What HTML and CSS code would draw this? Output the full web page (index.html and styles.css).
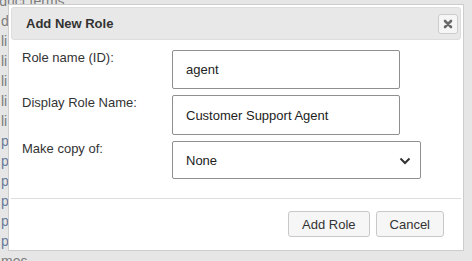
FILE: index.html
```html
<!DOCTYPE html>
<html lang="en">

<head>
  <meta charset="UTF-8" />
  <meta name="viewport" content="width=device-width, initial-scale=1.0" />
  <title>Add New Role</title>
  <link rel="stylesheet" href="styles.css">
</head>

<body>
  <div class="page">
    <div class="page-line first">product terms</div>
    <div class="page-line">d</div>
    <div class="page-line">li</div>
    <div class="page-line">li</div>
    <div class="page-line">li</div>
    <div class="page-line">li</div>
    <div class="page-line">li</div>
    <div class="page-line link">p.</div>
    <div class="page-line link">p.</div>
    <div class="page-line link">p.</div>
    <div class="page-line link">p.</div>
    <div class="page-line link">p.</div>
    <div class="page-line link">p.</div>
    <div class="page-line">mes</div>
  </div>

  <div class="dialog">
    <div class="dialog-title">
      <span class="dialog-title-text">Add New Role</span>
      <button class="dialog-close" type="button" title="Close">
        <svg width="10" height="10" viewBox="0 0 10 10">
          <path d="M2 2 L8 8 M8 2 L2 8" stroke="#6a6a6a" stroke-width="2.6" stroke-linecap="round" />
        </svg>
      </button>
    </div>

    <div class="dialog-body">
      <label class="field-label" for="role-id">Role name (ID):</label>
      <input class="field-input" id="role-id" type="text" value="agent" />

      <label class="field-label" for="role-name">Display Role Name:</label>
      <input class="field-input tall" id="role-name" type="text" value="Customer Support Agent" />

      <label class="field-label" for="role-copy">Make copy of:</label>
      <div class="select-wrap">
        <select class="field-select" id="role-copy">
          <option>None</option>
        </select>
        <svg class="select-arrow" width="12" height="8" viewBox="0 0 12 8">
          <path d="M1.5 1.5 L6 6 L10.5 1.5" fill="none" stroke="#333" stroke-width="2" />
        </svg>
      </div>
    </div>

    <div class="dialog-footer">
      <button class="btn" type="button">Add Role</button>
      <button class="btn" type="button">Cancel</button>
    </div>
  </div>
</body>

</html>
```

FILE: styles.css
```css
* {
  margin: 0;
  padding: 0;
  box-sizing: border-box;
}

html,
body {
  width: 100%;
  height: 100%;
}

body {
  background: #e6e6e6;
  font-family: "Liberation Sans", Arial, sans-serif;
  font-size: 13px;
  color: #333;
  overflow: hidden;
}

/* page behind the modal */
.page {
  margin-top: -9px;
  padding-left: 1px;
  color: #7c7c7c;
  font-size: 14px;
}

.page-line {
  line-height: 20px;
  white-space: nowrap;
}

.page-line.first {
  margin-left: -22px;
}

.page-line.link {
  color: #687a9a;
}

.dialog {
  position: absolute;
  left: 8px;
  top: 4px;
  width: 456px;
  background: #fff;
  border: 1px solid #cdcdcd;
  padding: 2px;
  display: flex;
  flex-direction: column;
}

.dialog-title {
  height: 33px;
  background: #e8e8e8;
  border: 1px solid #dddddd;
  border-radius: 3px;
  display: flex;
  align-items: center;
  justify-content: space-between;
  padding: 0 2px 0 14px;
}

.dialog-title-text {
  font-weight: bold;
  color: #333;
}

.dialog-close {
  width: 20px;
  height: 20px;
  border: 1px solid #cccccc;
  border-radius: 3px;
  background: #f6f6f6;
  display: flex;
  align-items: center;
  justify-content: center;
}

.dialog-body {
  display: grid;
  grid-template-columns: 150px auto;
  row-gap: 6px;
  padding: 10px 0 19px 11px;
  align-items: start;
}

.field-label {
  line-height: 16px;
  color: #333;
}

.field-input {
  width: 228px;
  height: 39px;
  border: 1px solid #8f8f8f;
  border-radius: 2px;
  padding: 0 13px;
  font-family: inherit;
  font-size: 13px;
  color: #222;
  background: #fff;
  outline: none;
}

.field-input.tall {
  height: 40px;
}

.select-wrap {
  position: relative;
  width: 249px;
  height: 38px;
}

.field-select {
  width: 100%;
  height: 100%;
  border: 1px solid #8f8f8f;
  border-radius: 2px;
  padding: 0 13px;
  font-family: inherit;
  font-size: 13px;
  color: #222;
  background: #fff;
  appearance: none;
  -webkit-appearance: none;
  outline: none;
}

.select-arrow {
  position: absolute;
  right: 10px;
  top: 16px;
  pointer-events: none;
}

.dialog-footer {
  border-top: 1px solid #dddddd;
  display: flex;
  justify-content: flex-end;
  gap: 6px;
  padding: 12px 17px 11px 0;
}

.btn {
  height: 26px;
  padding: 0 13px;
  border: 1px solid #c8c8c8;
  border-radius: 3px;
  background: #f6f6f6;
  font-family: inherit;
  font-size: 13px;
  color: #333;
}
```
